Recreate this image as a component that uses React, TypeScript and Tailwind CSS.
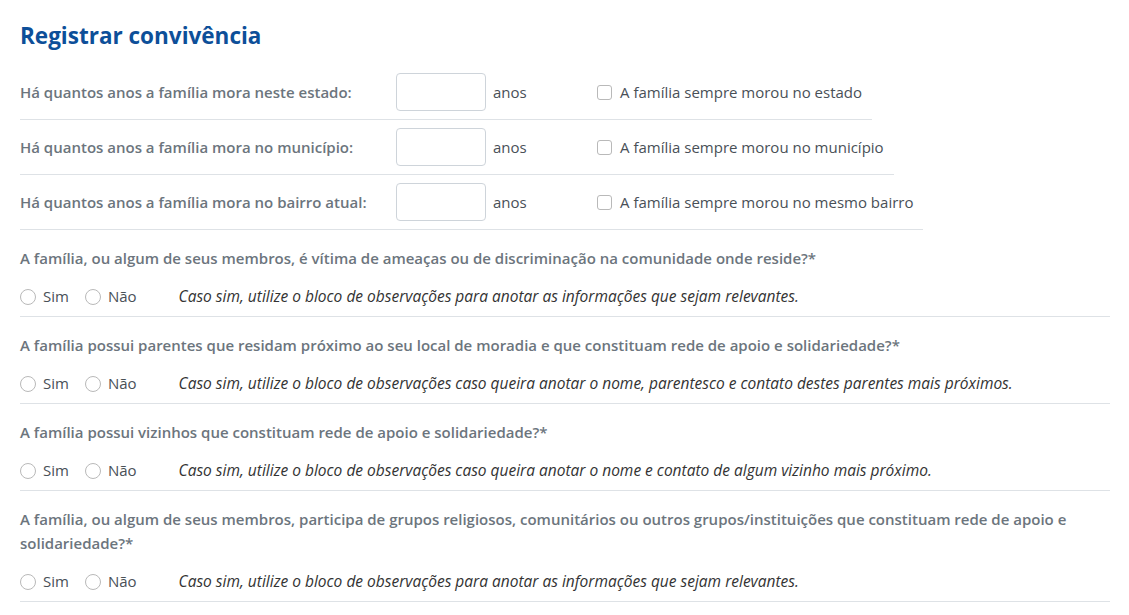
const font = { fontFamily: '"Open Sans", "Noto Sans", sans-serif' };

const stayRows = [
  { label: "Há quantos anos a família mora neste estado:", check: "A família sempre morou no estado" },
  { label: "Há quantos anos a família mora no município:", check: "A família sempre morou no município" },
  { label: "Há quantos anos a família mora no bairro atual:", check: "A família sempre morou no mesmo bairro" },
];

const questions = [
  {
    q: "A família, ou algum de seus membros, é vítima de ameaças ou de discriminação na comunidade onde reside?*",
    hint: "Caso sim, utilize o bloco de observações para anotar as informações que sejam relevantes.",
  },
  {
    q: "A família possui parentes que residam próximo ao seu local de moradia e que constituam rede de apoio e solidariedade?*",
    hint: "Caso sim, utilize o bloco de observações caso queira anotar o nome, parentesco e contato destes parentes mais próximos.",
  },
  {
    q: "A família possui vizinhos que constituam rede de apoio e solidariedade?*",
    hint: "Caso sim, utilize o bloco de observações caso queira anotar o nome e contato de algum vizinho mais próximo.",
  },
  {
    q: "A família, ou algum de seus membros, participa de grupos religiosos, comunitários ou outros grupos/instituições que constituam rede de apoio e solidariedade?*",
    hint: "Caso sim, utilize o bloco de observações para anotar as informações que sejam relevantes.",
  },
];

function Radio({ label }: { label: string }) {
  return (
    <label className="flex items-center gap-[7px]">
      <span className="h-4 w-4 rounded-full border border-[#b9b9b9] bg-white" />
      <span>{label}</span>
    </label>
  );
}

export default function App() {
  return (
    <div className="min-h-screen bg-white px-5 pt-[20px] text-[15px] text-[#495057]" style={font}>
      <h1 className="text-[22.5px] font-bold leading-[32px] text-[#0d4f99]">Registrar convivência</h1>

      <div className="mt-[21px] flex flex-col">
        {stayRows.map((row) => (
          <div key={row.label} className="flex w-fit items-center border-b border-[#dee2e6] pb-[8px] pr-[10px] pt-0 [&:not(:first-child)]:pt-[8px]">
            <span className="w-[376px] font-semibold text-[#6c757d]">{row.label}</span>
            <input className="h-[38px] w-[90px] rounded-[4px] border border-[#ced4da] bg-white" />
            <span className="ml-[7px] w-[104px]">anos</span>
            <label className="flex items-center gap-[8px]">
              <span className="h-[15px] w-[15px] rounded-[3px] border border-[#b9b9b9] bg-white" />
              <span>{row.check}</span>
            </label>
          </div>
        ))}
      </div>

      <div className="flex w-[1090px] flex-col">
        {questions.map((item) => (
          <div key={item.q} className="border-b border-[#dee2e6] pb-[9px] pt-[16px]">
            <p className="pr-[20px] font-semibold leading-[24px] text-[#6c757d]">{item.q}</p>
            <div className="mt-[16px] flex h-[21px] items-center leading-[21px]">
              <Radio label="Sim" />
              <span className="ml-[16px]"><Radio label="Não" /></span>
              <span className="ml-[42px] text-[15.5px] italic text-[#333]">{item.hint}</span>
            </div>
          </div>
        ))}
      </div>
    </div>
  );
}
